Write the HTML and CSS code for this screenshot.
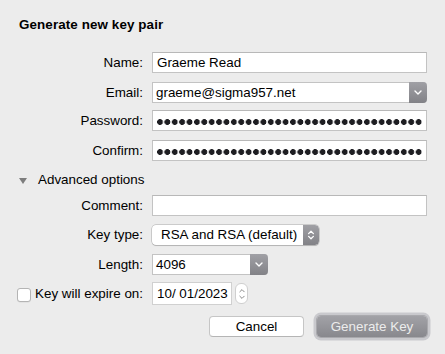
FILE: index.html
```html
<!DOCTYPE html>
<html>
<head>
<meta charset="utf-8">
<link rel="stylesheet" href="styles.css">
</head>
<body>
<div class="dialog">
  <h1 class="title">Generate new key pair</h1>

  <div class="row r-name">
    <span class="label">Name:</span>
    <div class="field wide"><span class="value">Graeme Read</span></div>
  </div>

  <div class="row r-email">
    <span class="label">Email:</span>
    <div class="combo wide">
      <span class="value">graeme@sigma957.net</span>
      <span class="combo-btn"><svg width="8" height="5" viewBox="0 0 8 5"><path d="M1 1l3 3 3-3" fill="none" stroke="#fff" stroke-width="1.4" stroke-linecap="round" stroke-linejoin="round"/></svg></span>
    </div>
  </div>

  <div class="row r-pass">
    <span class="label">Password:</span>
    <div class="field wide"><span class="dots"></span></div>
  </div>

  <div class="row r-confirm">
    <span class="label">Confirm:</span>
    <div class="field wide"><span class="dots"></span></div>
  </div>

  <div class="disclosure">
    <span class="tri"></span>
    <span>Advanced options</span>
  </div>

  <div class="row r-comment">
    <span class="label">Comment:</span>
    <div class="field wide"></div>
  </div>

  <div class="row r-type">
    <span class="label">Key type:</span>
    <div class="popup">
      <span class="popup-text">RSA and RSA (default)</span>
      <span class="popup-btn"><svg width="8" height="12" viewBox="0 0 8 12"><path d="M1.6 4.6L4 2.2l2.4 2.4M1.6 7.4L4 9.8l2.4-2.4" fill="none" stroke="#fff" stroke-width="1.3" stroke-linecap="round" stroke-linejoin="round"/></svg></span>
    </div>
  </div>

  <div class="row r-length">
    <span class="label">Length:</span>
    <div class="combo short">
      <span class="value">4096</span>
      <span class="combo-btn"><svg width="8" height="5" viewBox="0 0 8 5"><path d="M1 1l3 3 3-3" fill="none" stroke="#fff" stroke-width="1.4" stroke-linecap="round" stroke-linejoin="round"/></svg></span>
    </div>
  </div>

  <div class="row r-expire">
    <label class="label check-label">
      <span class="checkbox"></span>
      <span>Key will expire on:</span>
    </label>
    <div class="date"><span class="value">10/ 01/2023</span></div>
    <span class="stepper"><svg width="8" height="16" viewBox="0 0 8 16"><path d="M1.8 5.8L4 3.6l2.2 2.2M1.8 10.2L4 12.4l2.2-2.2" fill="none" stroke="#8a8a8a" stroke-width="1" stroke-linecap="round" stroke-linejoin="round"/></svg></span>
  </div>

  <div class="actions">
    <button class="btn cancel">Cancel</button>
    <button class="btn primary">Generate Key</button>
  </div>
</div>
</body>
</html>
```

FILE: styles.css
```css
html, body {
  margin: 0;
  padding: 0;
}
body {
  width: 445px;
  height: 354px;
  background: #ececec;
  font-family: "Liberation Sans", Arial, sans-serif;
  font-size: 13.4px;
  color: #000;
  overflow: hidden;
}
.dialog {
  padding-top: 17px;
  display: flex;
  flex-direction: column;
}
.title {
  margin: 0 0 0 19px;
  font-size: 13.4px;
  font-weight: bold;
  line-height: 16px;
  letter-spacing: 0.1px;
}
.row {
  display: flex;
  align-items: center;
  height: 21px;
}
.label {
  flex: 0 0 143px;
  width: 143px;
  margin-right: 9px;
  text-align: right;
  line-height: 16px;
  white-space: nowrap;
}
.r-name { margin-top: 19px; }
.r-email { margin-top: 9px; }
.r-pass { margin-top: 7px; }
.r-confirm { margin-top: 9px; }
.r-comment { margin-top: 7px; }
.r-type { margin-top: 9px; height: 20px; }
.r-length { margin-top: 9px; }
.r-expire { margin-top: 7px; height: 23px; }

.field {
  box-sizing: border-box;
  height: 21px;
  background: #fff;
  border: 1px solid #c3c3c3;
  border-top-color: #b8b8b8;
  display: flex;
  align-items: center;
  padding: 0 4px;
  overflow: hidden;
}
.wide { width: 275px; }
.value {
  line-height: 16px;
  white-space: nowrap;
}
.dots {
  display: block;
  width: 100%;
  height: 6px;
  margin-top: 3px;
  margin-right: -1px;
  background: radial-gradient(circle at 3px 3px, #1e1e22 2.6px, rgba(30,30,34,0) 3.2px) 0 0 / 7.4px 6px repeat-x;
}

.combo {
  box-sizing: border-box;
  height: 21px;
  background: #fff;
  border: 1px solid #c3c3c3;
  border-right: none;
  border-radius: 0 4px 4px 0;
  display: flex;
  align-items: center;
  padding-left: 3px;
}
.combo .value { flex: 1; }
.short { width: 116px; }
.combo-btn {
  align-self: stretch;
  margin: -1px 0;
  width: 18px;
  border-radius: 0 4px 4px 0;
  background: linear-gradient(#a0a0a5, #828287);
  display: flex;
  align-items: center;
  justify-content: center;
}

.disclosure {
  margin-top: 11px;
  margin-left: 19px;
  display: flex;
  align-items: center;
  line-height: 16px;
  height: 16px;
}
.tri {
  width: 0;
  height: 0;
  border-left: 4px solid transparent;
  border-right: 4px solid transparent;
  border-top: 6px solid #7d7d7d;
  margin-right: 11px;
  margin-top: 1px;
}

.popup {
  box-sizing: border-box;
  width: 167px;
  height: 20px;
  background: #fff;
  border-radius: 4px;
  box-shadow: 0 0 0 0.5px rgba(0,0,0,0.28), 0 1px 1px rgba(0,0,0,0.12);
  display: flex;
  align-items: center;
  overflow: hidden;
}
.popup-text {
  flex: 1;
  padding-left: 9px;
  line-height: 16px;
  white-space: nowrap;
}
.popup-btn {
  align-self: stretch;
  width: 16px;
  border-radius: 0 4px 4px 0;
  background: linear-gradient(#a0a0a5, #828287);
  display: flex;
  align-items: center;
  justify-content: center;
}

.check-label {
  display: flex;
  justify-content: space-between;
  align-items: center;
  box-sizing: border-box;
  padding-left: 17px;
}
.checkbox {
  box-sizing: border-box;
  width: 14px;
  height: 14px;
  background: #fff;
  border: 1px solid #b4b4b4;
  border-radius: 3px;
  box-shadow: 0 0.5px 0.5px rgba(0,0,0,0.08);
  margin-top: 2px;
}
.date {
  box-sizing: border-box;
  width: 80px;
  height: 23px;
  background: #fff;
  border: 1px solid #d0d0d0;
  display: flex;
  align-items: center;
  padding-left: 4px;
}
.stepper {
  box-sizing: border-box;
  width: 13px;
  height: 21px;
  margin-left: 3px;
  background: #fff;
  border: 1px solid #cfcfcf;
  border-radius: 6px;
  display: flex;
  align-items: center;
  justify-content: center;
}

.actions {
  margin-top: 11px;
  display: flex;
  justify-content: flex-end;
  padding-right: 18px;
  gap: 13px;
}
.btn {
  box-sizing: border-box;
  height: 21px;
  margin: 0;
  padding: 0;
  font-family: "Liberation Sans", Arial, sans-serif;
  font-size: 13.4px;
  line-height: 16px;
  border-radius: 4px;
}
.cancel {
  width: 95px;
  background: #fff;
  color: #000;
  border: 1px solid #c6c6c6;
  border-bottom-color: #b5b5b5;
}
.primary {
  width: 110px;
  color: #ececec;
  border: none;
  background: linear-gradient(#a2a2a7, #88888d);
  box-shadow: 0 0 0 1px rgba(110,110,115,0.35), 0 0 0 3.5px rgba(160,160,168,0.45);
}
```
